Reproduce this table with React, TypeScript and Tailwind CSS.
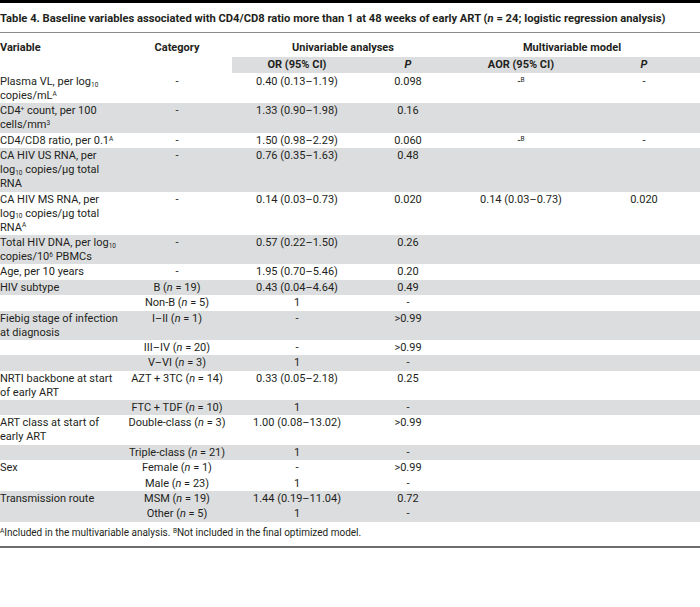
import React from 'react';

type Row = {
  v?: React.ReactNode;
  c: React.ReactNode;
  or: string;
  p: string;
  aor?: React.ReactNode;
  p2?: string;
  gray: boolean;
};

const Sub = ({ children }: { children: React.ReactNode }) => (
  <sub className="text-[6.5px]">{children}</sub>
);
const Sup = ({ children }: { children: React.ReactNode }) => (
  <sup className="text-[6.5px]">{children}</sup>
);
const N = ({ v }: { v: string }) => (
  <>
    (<i>n</i> = {v})
  </>
);

const rows: Row[] = [
  {
    v: (
      <>
        Plasma VL, per log<Sub>10</Sub>
        <br />
        copies/mL<Sup>A</Sup>
      </>
    ),
    c: '-',
    or: '0.40 (0.13–1.19)',
    p: '0.098',
    aor: (
      <>
        -<Sup>B</Sup>
      </>
    ),
    p2: '-',
    gray: false,
  },
  {
    v: (
      <>
        CD4<Sup>+</Sup> count, per 100
        <br />
        cells/mm<Sup>3</Sup>
      </>
    ),
    c: '-',
    or: '1.33 (0.90–1.98)',
    p: '0.16',
    gray: true,
  },
  {
    v: (
      <>
        CD4/CD8 ratio, per 0.1<Sup>A</Sup>
      </>
    ),
    c: '-',
    or: '1.50 (0.98–2.29)',
    p: '0.060',
    aor: (
      <>
        -<Sup>B</Sup>
      </>
    ),
    p2: '-',
    gray: false,
  },
  {
    v: (
      <>
        CA HIV US RNA, per
        <br />
        log<Sub>10</Sub> copies/μg total
        <br />
        RNA
      </>
    ),
    c: '-',
    or: '0.76 (0.35–1.63)',
    p: '0.48',
    gray: true,
  },
  {
    v: (
      <>
        CA HIV MS RNA, per
        <br />
        log<Sub>10</Sub> copies/μg total
        <br />
        RNA<Sup>A</Sup>
      </>
    ),
    c: '-',
    or: '0.14 (0.03–0.73)',
    p: '0.020',
    aor: '0.14 (0.03–0.73)',
    p2: '0.020',
    gray: false,
  },
  {
    v: (
      <>
        Total HIV DNA, per log<Sub>10</Sub>
        <br />
        copies/10<Sup>6</Sup> PBMCs
      </>
    ),
    c: '-',
    or: '0.57 (0.22–1.50)',
    p: '0.26',
    gray: true,
  },
  { v: 'Age, per 10 years', c: '-', or: '1.95 (0.70–5.46)', p: '0.20', gray: false },
  { v: 'HIV subtype', c: <>B <N v="19" /></>, or: '0.43 (0.04–4.64)', p: '0.49', gray: true },
  { c: <>Non-B <N v="5" /></>, or: '1', p: '-', gray: false },
  {
    v: (
      <>
        Fiebig stage of infection
        <br />
        at diagnosis
      </>
    ),
    c: <>I–II <N v="1" /></>,
    or: '-',
    p: '>0.99',
    gray: true,
  },
  { c: <>III–IV <N v="20" /></>, or: '-', p: '>0.99', gray: false },
  { c: <>V–VI <N v="3" /></>, or: '1', p: '-', gray: true },
  {
    v: (
      <>
        NRTI backbone at start
        <br />
        of early ART
      </>
    ),
    c: <>AZT + 3TC <N v="14" /></>,
    or: '0.33 (0.05–2.18)',
    p: '0.25',
    gray: false,
  },
  { c: <>FTC + TDF <N v="10" /></>, or: '1', p: '-', gray: true },
  {
    v: (
      <>
        ART class at start of
        <br />
        early ART
      </>
    ),
    c: <>Double-class <N v="3" /></>,
    or: '1.00 (0.08–13.02)',
    p: '>0.99',
    gray: false,
  },
  { c: <>Triple-class <N v="21" /></>, or: '1', p: '-', gray: true },
  { v: 'Sex', c: <>Female <N v="1" /></>, or: '-', p: '>0.99', gray: false },
  { c: <>Male <N v="23" /></>, or: '1', p: '-', gray: false },
  { v: 'Transmission route', c: <>MSM <N v="19" /></>, or: '1.44 (0.19–11.04)', p: '0.72', gray: true },
  { c: <>Other <N v="5" /></>, or: '1', p: '-', gray: true },
];

const cols = 'grid grid-cols-[122px_110px_130px_92px_134px_112px]';

export default function App() {
  return (
    <div
      className="h-[607px] w-[700px] bg-white text-[11px] leading-[14px] text-[#231f20]"
      style={{ fontFamily: 'Roboto, "Liberation Sans", sans-serif' }}
    >
      <div className="h-[3px] bg-black" />
      <h1 className="flex h-[30px] items-center whitespace-nowrap border-b border-[#8a8a8a] pt-[2px] text-[11.2px] font-bold">
        Table 4. Baseline variables associated with CD4/CD8 ratio more than 1 at 48 weeks of early ART (
        <i>n</i>&nbsp;= 24; logistic regression analysis)
      </h1>

      <div className={`${cols} mt-[8px] font-bold`}>
        <div>Variable</div>
        <div className="text-center">Category</div>
        <div className="col-span-2 text-center">Univariable analyses</div>
        <div className="col-span-2 pr-[10px] text-center">Multivariable model</div>
      </div>
      <div className={`${cols} mt-[2px] font-bold`}>
        <div />
        <div />
        <div className="col-span-4 grid grid-cols-[130px_92px_134px_112px] bg-[#dcdddf] py-[1px]">
          <div className="text-center">OR (95% CI)</div>
          <div className="text-center">
            <i>P</i>
          </div>
          <div className="text-center">AOR (95% CI)</div>
          <div className="text-center">
            <i>P</i>
          </div>
        </div>
      </div>

      <div className="mt-[1px]">
        {rows.map((r, i) => (
          <div
            key={i}
            className={`${cols} whitespace-nowrap pb-[0.4px] pt-[1px] ${r.gray ? 'bg-[#dcdddf]' : ''}`}
          >
            <div>{r.v}</div>
            <div className="text-center">{r.c}</div>
            <div className="text-center">{r.or}</div>
            <div className="text-center">{r.p}</div>
            <div className="text-center">{r.aor}</div>
            <div className="text-center">{r.p2}</div>
          </div>
        ))}
      </div>

      <p className="mt-[4px] text-[10px]">
        <Sup>A</Sup>Included in the multivariable analysis. <Sup>B</Sup>Not included in the final optimized model.
      </p>
      <div className="mt-[6px] h-[2px] bg-[#6e6e6e]" />
    </div>
  );
}
